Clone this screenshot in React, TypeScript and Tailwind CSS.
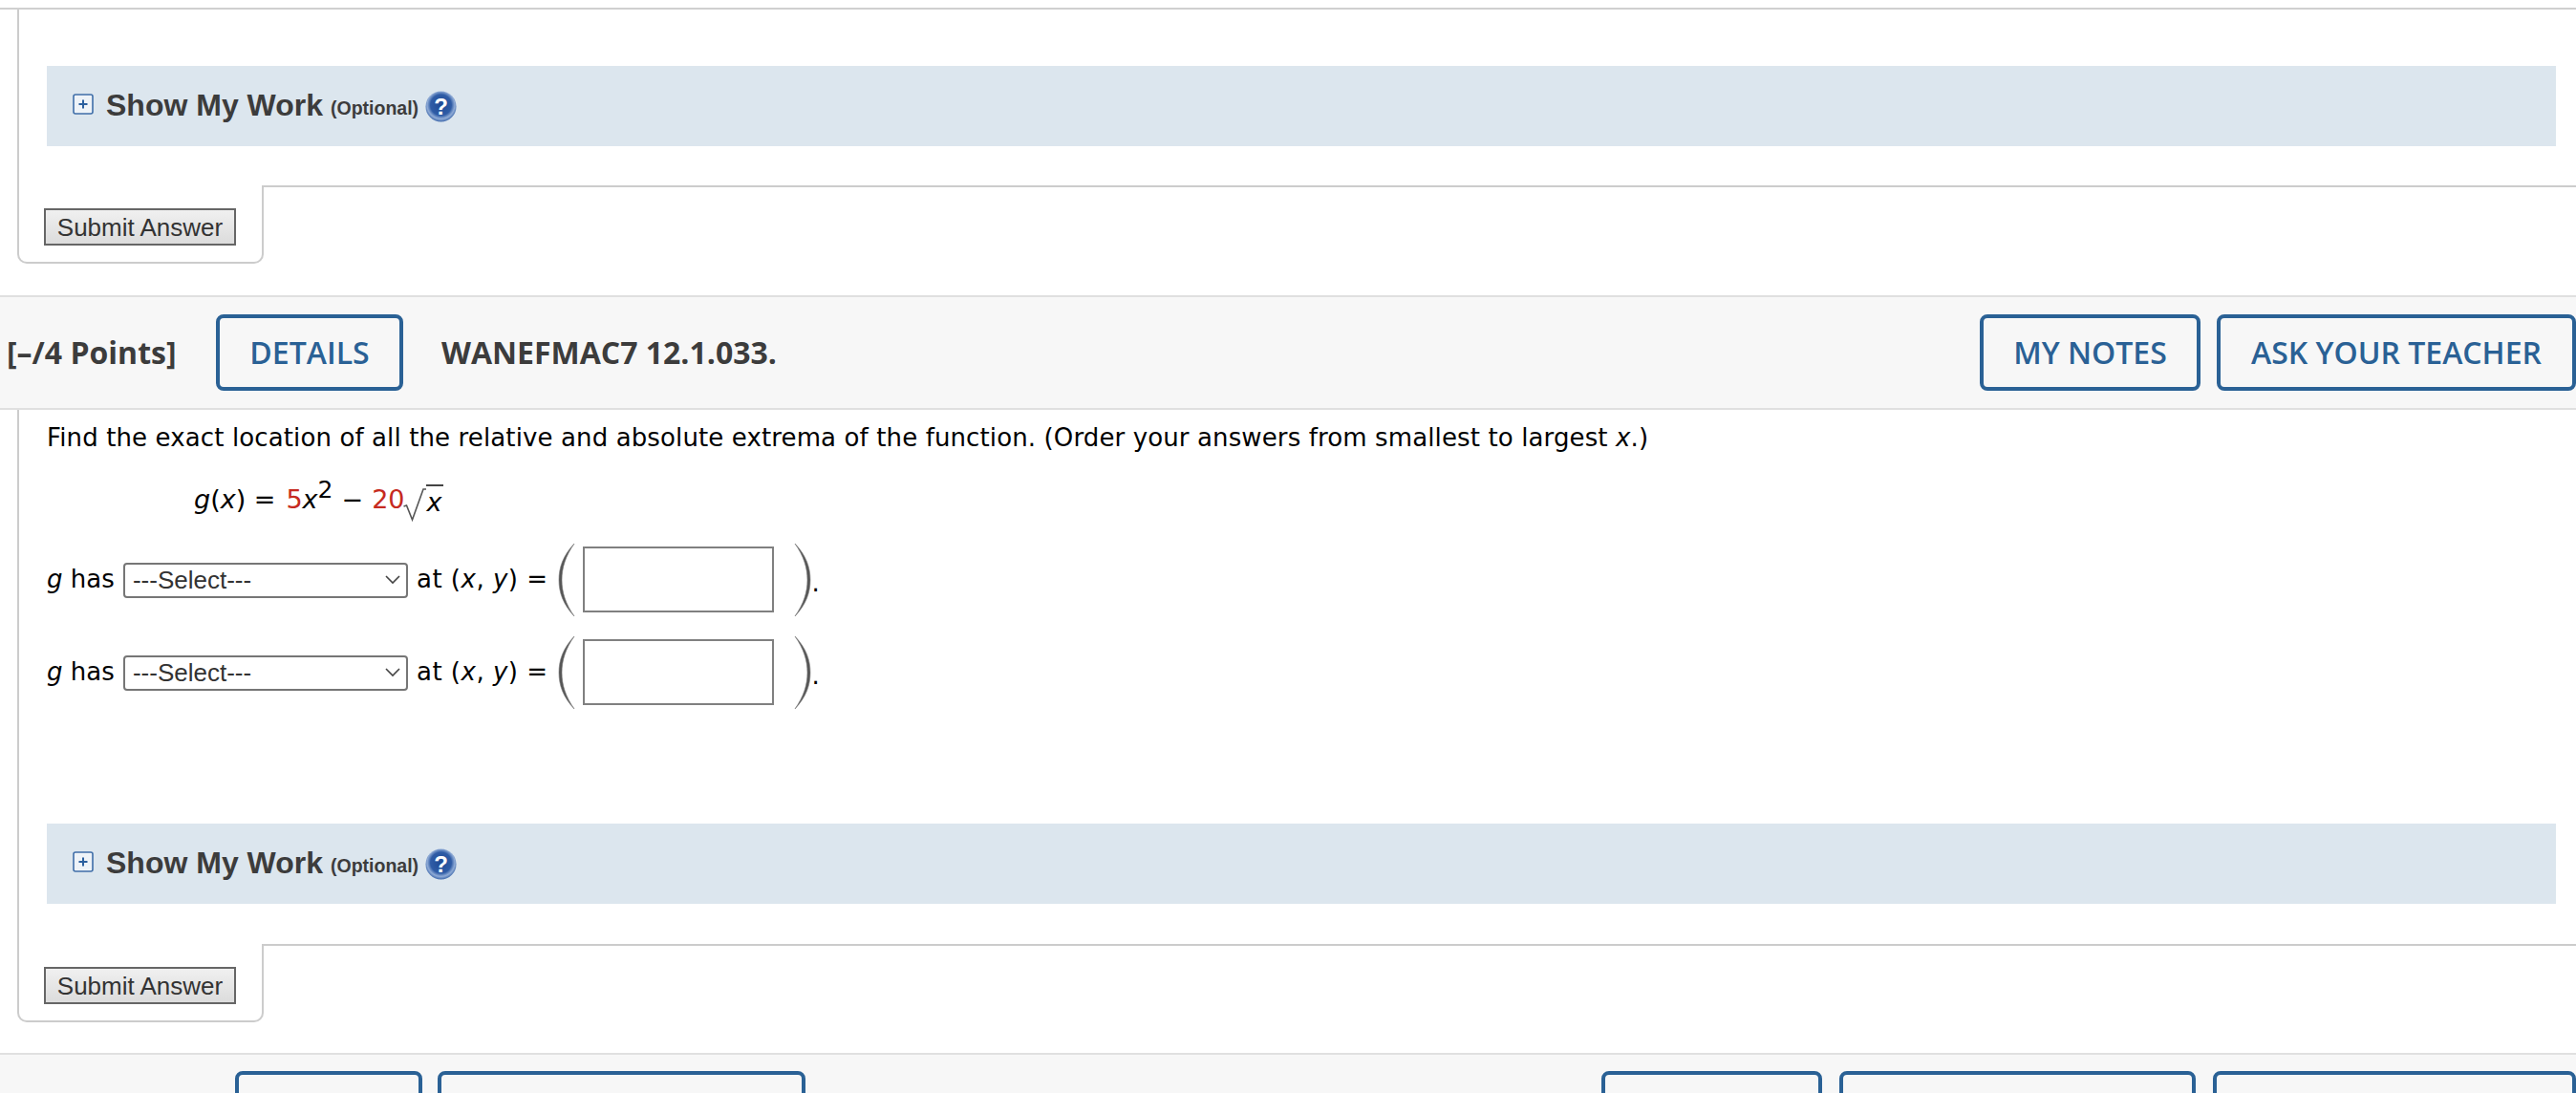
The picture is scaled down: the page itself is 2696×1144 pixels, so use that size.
import React from "react";

function PlusBox() {
  return (
    <svg width="22" height="22" viewBox="0 0 22 22" className="shrink-0">
      <rect x="1" y="1" width="20" height="20" rx="2" fill="#eef3f8" stroke="#3f6ea8" strokeWidth="1.6" />
      <path d="M11 6.5v9M6.5 11h9" stroke="#2a5f9e" strokeWidth="2" />
    </svg>
  );
}

function HelpIcon({ id }: { id: string }) {
  return (
    <svg width="33" height="33" viewBox="0 0 33 33" className="shrink-0">
      <defs>
        <radialGradient id={id} cx="50%" cy="45%" r="55%">
          <stop offset="0%" stopColor="#1f4a94" />
          <stop offset="62%" stopColor="#2f5ca6" />
          <stop offset="82%" stopColor="#8fabd6" />
          <stop offset="100%" stopColor="#3e68ab" />
        </radialGradient>
      </defs>
      <circle cx="16.5" cy="16.5" r="16" fill={`url(#${id})`} />
      <text x="16.5" y="25" textAnchor="middle" fill="#fff" fontSize="24" fontWeight="700" fontFamily="Liberation Sans, sans-serif">
        ?
      </text>
    </svg>
  );
}

function ShowMyWork({ id }: { id: string }) {
  return (
    <div className="ml-[49px] mr-[21px] flex h-[84px] items-center bg-[#dce6ee] pl-[27px] font-['Liberation_Sans',sans-serif] font-bold text-[#3c3c3c]">
      <span className="-mt-[4px] flex">
        <PlusBox />
      </span>
      <span className="ml-[13px] -mt-[3px] text-[32px] leading-none">Show My Work</span>
      <span className="ml-[8px] mt-[5px] text-[19.5px] leading-none">(Optional)</span>
      <span className="ml-[7px] flex">
        <HelpIcon id={id} />
      </span>
    </div>
  );
}

function SubmitRow() {
  return (
    <div className="ml-[18px] flex">
      <div className="h-[82px] w-[258px] rounded-b-[10px] border-x-2 border-b-2 border-[#cccccc] pl-[26px] pt-[24px]">
        <button className="h-[39px] w-[201px] border-2 border-[#666666] bg-gradient-to-b from-[#f0f0f0] to-[#dcdcdc] font-['Liberation_Sans',sans-serif] text-[26px] leading-none text-[#333333]">
          Submit Answer
        </button>
      </div>
      <div className="flex-1 border-t-2 border-[#cccccc]" />
    </div>
  );
}

function HeaderButton({ width, label, ariaLabel }: { width: string; label?: string; ariaLabel?: string }) {
  return (
    <button
      aria-label={ariaLabel}
      className={`h-[80px] shrink-0 rounded-[8px] border-[4px] border-[#2a6195] font-['Open_Sans',sans-serif] text-[32px] font-semibold leading-none text-[#2a6195] ${width}`}
    >
      {label}
    </button>
  );
}

function Paren({ flip }: { flip?: boolean }) {
  return (
    <svg width="20" height="78" viewBox="0 0 20 78" className={`shrink-0 ${flip ? "-scale-x-100" : ""}`}>
      <path d="M18 1C6 14 2 26 2 39s4 25 16 38C9 64 5 52 5 39S9 14 18 1Z" fill="#555555" stroke="#777777" strokeWidth="0.6" />
    </svg>
  );
}

function AnswerRow() {
  return (
    <div className="flex h-[69px] items-center font-['DejaVu_Sans',sans-serif] text-[26px] tracking-[0.12px] text-black">
      <i>g</i>
      <span className="ml-[8px]">has</span>
      <div className="relative ml-[9px] h-[37px] w-[298px] shrink-0">
        <select className="h-full w-full appearance-none rounded-[4px] border-2 border-[#767676] bg-white pl-[8px] font-['Liberation_Sans',sans-serif] text-[26px] leading-none tracking-normal text-[#333333]">
          <option>---Select---</option>
        </select>
        <svg width="18" height="12" viewBox="0 0 18 12" className="pointer-events-none absolute right-[7px] top-[13px]">
          <path d="M2 2l7 7 7-7" fill="none" stroke="#444444" strokeWidth="1.6" />
        </svg>
      </div>
      <span className="ml-[9px] tracking-[0.5px]">
        at (<i>x</i>, <i>y</i>) =
      </span>
      <span className="ml-[9px] flex">
        <Paren />
      </span>
      <div className="ml-[7px] h-[69px] w-[200px] shrink-0 border-2 border-[#808080] bg-white" />
      <span className="ml-[20px] flex">
        <Paren flip />
      </span>
      <span className="mt-[8px]">.</span>
    </div>
  );
}

function Equation() {
  return (
    <div className="ml-[203px] mt-[27px] flex h-[42px] items-end font-['DejaVu_Sans',sans-serif] text-[27px] leading-[40px] text-black">
      <span>
        <i>g</i>(<i>x</i>) ={" "}
      </span>
      <span className="ml-[11px] text-[#c62a20]">5</span>
      <i>x</i>
      <span className="relative top-[-18px] text-[25px] leading-none">2</span>
      <span className="ml-[9px]">−</span>
      <span className="ml-[9px] text-[#c62a20]">20</span>
      <svg width="24" height="40" viewBox="0 0 24 40" className="-ml-[1px] shrink-0 translate-y-[6px]">
        <path d="M0.5 21l3-1 6 15L21 3h3" fill="none" stroke="#555555" strokeWidth="1.6" />
      </svg>
      <span className="border-t-2 border-[#444444] pr-[2px] leading-[34px]">
        <i>x</i>
      </span>
    </div>
  );
}

export default function App() {
  return (
    <div className="h-[1144px] overflow-hidden bg-white font-['Liberation_Sans',sans-serif]">
      <div className="h-[10px] border-b-2 border-[#d0d0d0]" />

      {/* first question, tail end */}
      <div className="ml-[18px] h-[184px] border-l-2 border-[#cccccc] pt-[59px]">
        <div className="-ml-[20px]">
          <ShowMyWork id="help-a" />
        </div>
      </div>
      <SubmitRow />

      <div className="mt-[33px] flex h-[120px] items-center border-y-2 border-[#e0e0e0] bg-[#f7f7f7] pl-[7px]">
        <span className="w-[177px] whitespace-nowrap font-['Open_Sans',sans-serif] text-[32px] font-bold leading-none text-[#3c3c3c]">[–/4 Points]</span>
        <div className="ml-[42px]">
          <HeaderButton width="w-[196px]" label="DETAILS" />
        </div>
        <span className="ml-[40px] font-['Open_Sans',sans-serif] text-[32px] font-bold leading-none text-[#3c3c3c]">WANEFMAC7 12.1.033.</span>
        <div className="ml-auto flex gap-[17px]">
          <HeaderButton width="w-[231px]" label="MY NOTES" />
          <HeaderButton width="w-[376px]" label="ASK YOUR TEACHER" />
        </div>
      </div>

      {/* second question */}
      <div className="ml-[18px] h-[559px] border-l-2 border-[#cccccc]">
        <div className="-ml-[20px] pl-[49px]">
          <p className="pt-[13px] font-['DejaVu_Sans',sans-serif] text-[26px] leading-[32px] tracking-[0.12px] text-black">
            Find the exact location of all the relative and absolute extrema of the function. (Order your answers from smallest to largest <i>x</i>.)
          </p>
        </div>
        <div className="-ml-[20px]">
          <Equation />
          <div className="ml-[49px] mt-[29px] flex flex-col gap-[28px]">
            <AnswerRow />
            <AnswerRow />
          </div>
          <div className="mt-[124px]">
            <ShowMyWork id="help-b" />
          </div>
        </div>
      </div>
      <SubmitRow />

      <div className="mt-[32px] flex h-[120px] items-start border-t-2 border-[#e0e0e0] bg-[#f7f7f7] pl-[246px] pt-[17px]">
        <div className="flex gap-[16px]">
          <HeaderButton width="w-[196px]" ariaLabel="Details" />
          <HeaderButton width="w-[385px]" ariaLabel="Previous Answers" />
        </div>
        <div className="ml-auto flex gap-[18px]">
          <HeaderButton width="w-[231px]" ariaLabel="My Notes" />
          <HeaderButton width="w-[373px]" ariaLabel="Practice Another" />
          <HeaderButton width="w-[380px]" ariaLabel="Ask Your Teacher" />
        </div>
      </div>
    </div>
  );
}
